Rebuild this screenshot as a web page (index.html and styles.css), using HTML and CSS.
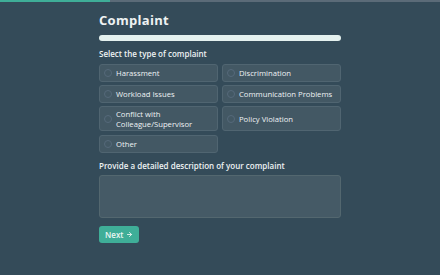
FILE: index.html
```html
<!DOCTYPE html>
<html lang="en">
<head>
    <meta charset="UTF-8">
    <meta name="viewport" content="width=device-width, initial-scale=1.0">
    <title>Complaint</title>
    <link rel="stylesheet" href="styles.css">
</head>
<body>
    <!-- overall progress across the whole wizard -->
    <div class="topbar"><div class="topbar-fill"></div></div>

    <div class="form">
        <h1>Complaint</h1>
        <div class="progress"></div>

        <div class="label">Select the type of complaint</div>
        <div class="options">
            <label class="option"><span class="radio"></span>Harassment</label>
            <label class="option"><span class="radio"></span>Discrimination</label>
            <label class="option"><span class="radio"></span>Workload Issues</label>
            <label class="option"><span class="radio"></span>Communication Problems</label>
            <label class="option"><span class="radio"></span>Conflict with Colleague/Supervisor</label>
            <label class="option"><span class="radio"></span>Policy Violation</label>
            <label class="option"><span class="radio"></span>Other</label>
        </div>

        <div class="label desc-label">Provide a detailed description of your complaint</div>
        <div class="textarea"></div>

        <button class="next">Next
            <svg class="arrow" width="7" height="7" viewBox="0 0 24 24" fill="none" stroke="currentColor" stroke-width="3" stroke-linecap="round" stroke-linejoin="round"><path d="M5 12h14"/><path d="m12 5 7 7-7 7"/></svg>
        </button>
    </div>
</body>
</html>
```

FILE: styles.css
```css
html, body {
    margin: 0;
    padding: 0;
}
body {
    background-color: #344b59;
    font-family: "Open Sans", "DejaVu Sans", sans-serif;
    color: #eef2f3;
    height: 275px;
    overflow: hidden;
}
.topbar {
    height: 2px;
    background-color: #5b6b78;
}
.topbar-fill {
    width: 110px;
    height: 2px;
    background-color: #3fae98;
}
.form {
    width: 242px;
    margin: 0 auto;
    padding-top: 10px;
}
h1 {
    margin: 0;
    font-size: 13px;
    font-weight: 700;
    line-height: 16px;
    letter-spacing: 0.3px;
}
.progress {
    margin-top: 7px;
    height: 6px;
    border-radius: 3px;
    background-color: #e4f1ef;
}
.label {
    margin-top: 7px;
    font-size: 8px;
    line-height: 12px;
    font-weight: 600;
}
.options {
    margin-top: 4px;
    display: grid;
    grid-template-columns: 1fr 1fr;
    column-gap: 4px;
    row-gap: 3px;
}
.option {
    display: flex;
    align-items: center;
    min-height: 16px;
    padding: 0 4px;
    background-color: #435864;
    border: 1px solid #506571;
    border-radius: 3px;
    font-size: 7.7px;
    line-height: 10px;
    color: #eef2f4;
}
.option:nth-child(5) {
    padding-top: 1.5px;
    padding-bottom: 1.5px;
}
.option:nth-child(7) {
    margin-top: 1px;
}
.radio {
    flex: none;
    width: 6px;
    height: 6px;
    margin-right: 4px;
    border: 1px solid #55697a;
    border-radius: 50%;
}
.desc-label {
    margin-top: 7px;
}
.textarea {
    margin-top: 3px;
    height: 41px;
    background-color: #455a66;
    border: 1px solid #53676f;
    border-radius: 3px;
}
.next {
    margin-top: 8px;
    height: 17px;
    padding: 0 6px;
    border: none;
    border-radius: 3px;
    background-color: #3fae98;
    color: #eaf6f3;
    font-family: inherit;
    font-size: 8px;
    font-weight: 600;
    display: flex;
    align-items: center;
    gap: 3px;
}
```
